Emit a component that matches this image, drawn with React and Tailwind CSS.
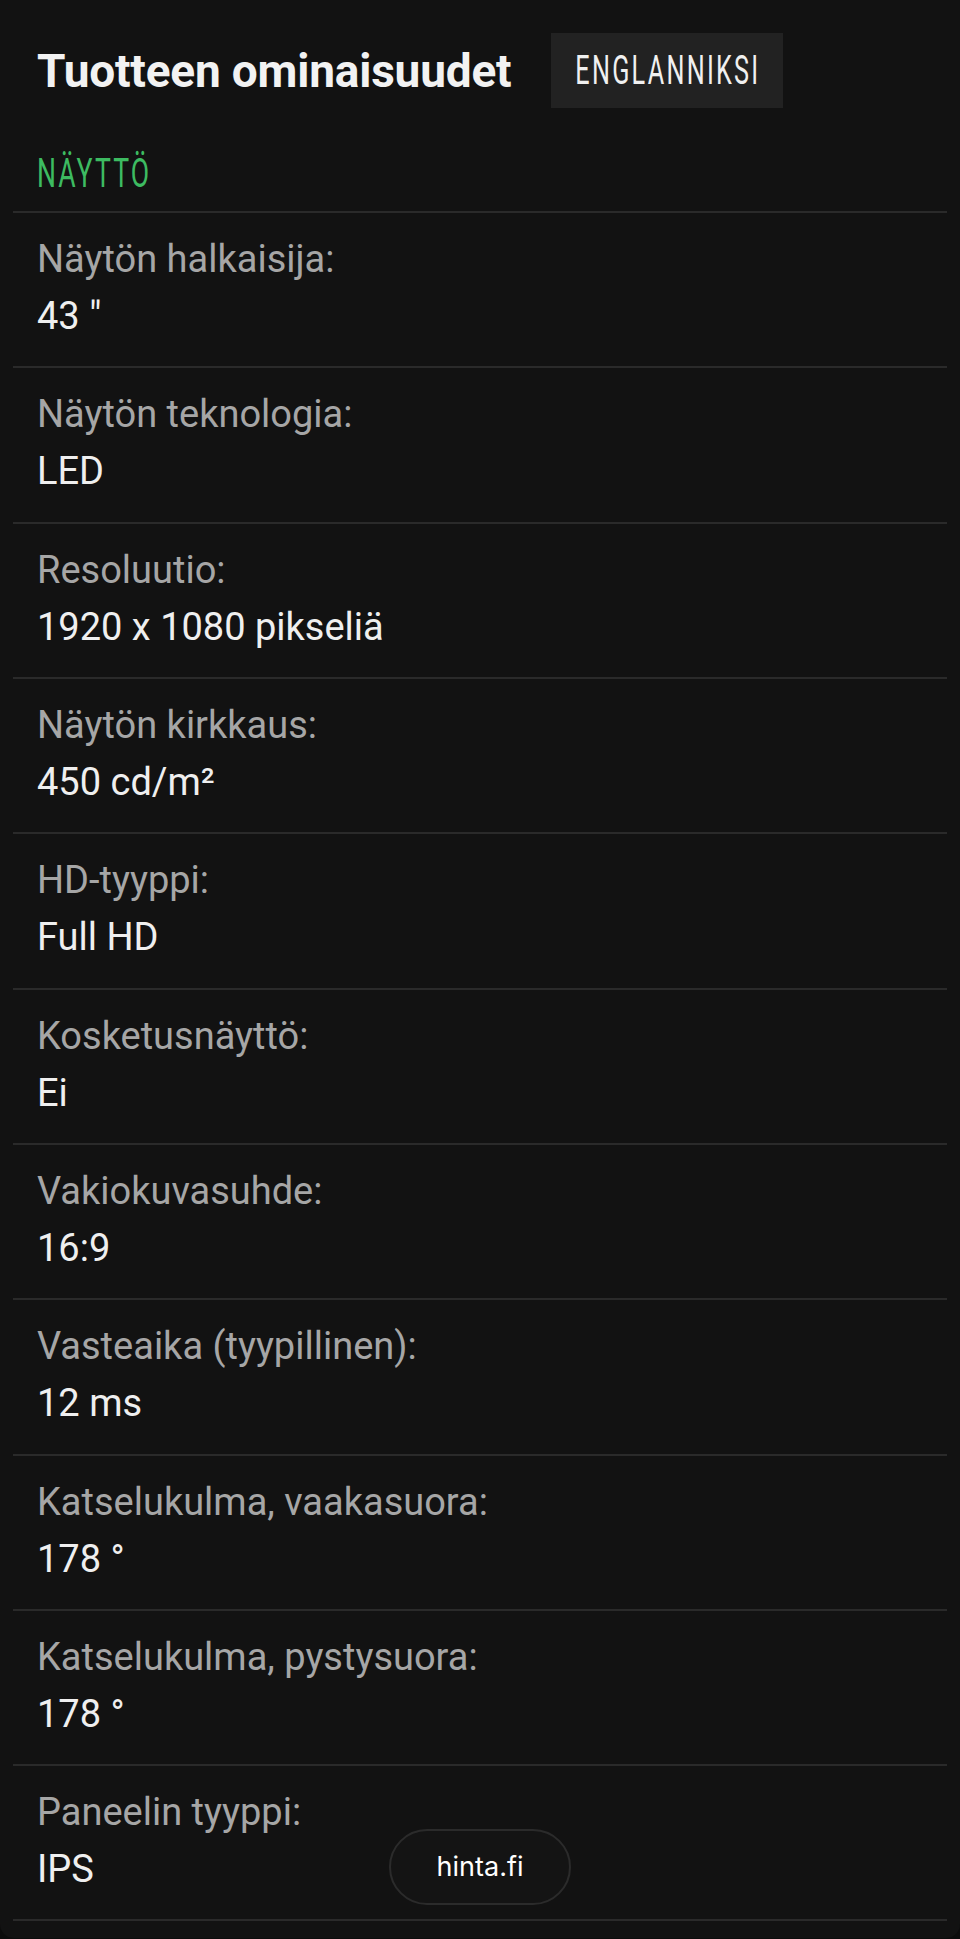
const specs = [
    { label: "Näytön halkaisija:", value: '43 "' },
    { label: "Näytön teknologia:", value: "LED" },
    { label: "Resoluutio:", value: "1920 x 1080 pikseliä" },
    { label: "Näytön kirkkaus:", value: "450 cd/m²" },
    { label: "HD-tyyppi:", value: "Full HD" },
    { label: "Kosketusnäyttö:", value: "Ei" },
    { label: "Vakiokuvasuhde:", value: "16:9" },
    { label: "Vasteaika (tyypillinen):", value: "12 ms" },
    { label: "Katselukulma, vaakasuora:", value: "178 °" },
    { label: "Katselukulma, pystysuora:", value: "178 °" },
    { label: "Paneelin tyyppi:", value: "IPS" },
];

export default function App() {
    return (
    <div className="min-h-screen bg-[#0c0c0c] font-['Roboto',sans-serif]">
        <div className="bg-[#121212] rounded-b-[14px] px-[13px] pb-[17px]">
            {/* header */}
            <div className="flex items-center px-[24px] pt-[33px]">
                <h1 className="text-[46px] leading-[56px] font-bold text-[#f2f2f2] tracking-[-0.2px] whitespace-nowrap">Tuotteen ominaisuudet</h1>
                <button className="ml-[40px] w-[232px] h-[75px] bg-[#222222] flex items-center justify-center shrink-0">
                    <span className="inline-block scale-x-[0.63] text-[40px] leading-[40px] tracking-[0.09em] text-[#f0f0f0] whitespace-nowrap">ENGLANNIKSI</span>
                </button>
            </div>
            {/* section title */}
            <div className="px-[24px] pt-[46px] pb-[17px]">
                <h2 className="inline-block origin-left scale-x-[0.665] text-[40px] leading-[40px] tracking-[0.08em] text-[#3dbb61]">NÄYTTÖ</h2>
            </div>
            {/* rows */}
            <div className="border-t-2 border-[#2a2a2a]">
                {specs.map((s) => (
                    <div key={s.label} className="border-b-2 border-[#2a2a2a] px-[24px] pt-[18px] pb-[21px] text-[38px] leading-[57.15px]">
                        <div className="text-[#a6a6a6]">{s.label}</div>
                        <div className="text-[#efefef]">{s.value}</div>
                    </div>
                ))}
            </div>
        </div>
        {/* floating site badge */}
        <div className="fixed bottom-[34px] left-1/2 -translate-x-1/2 w-[182px] h-[76px] rounded-full border-2 border-[#2b2b2b] bg-[#141414] flex items-center justify-center">
            <span className="font-['Inter',sans-serif] text-[27px] text-white">hinta.fi</span>
        </div>
    </div>
    );
}
